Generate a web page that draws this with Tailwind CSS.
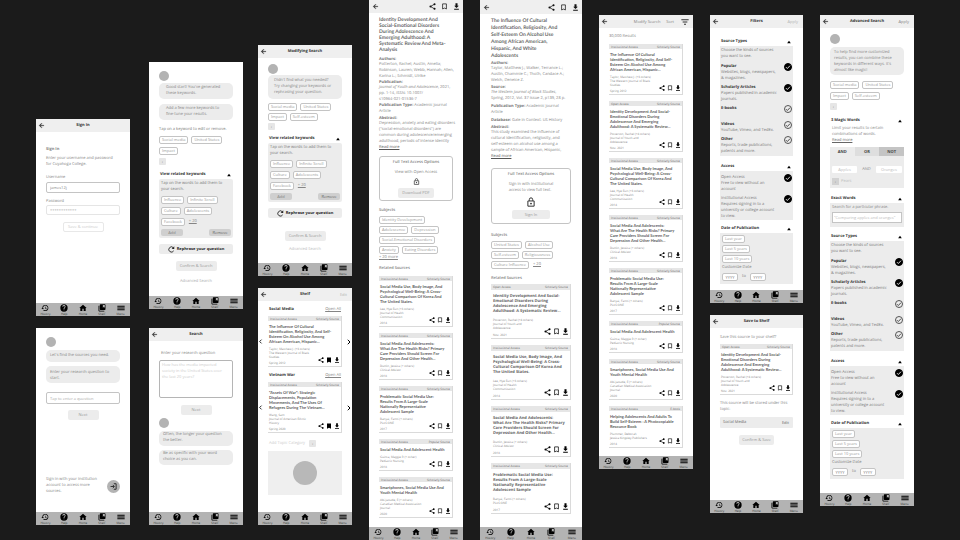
<!DOCTYPE html>
<html lang="en">
<head>
<meta charset="utf-8">
<title>Research app wireframes</title>
<script src="https://cdn.jsdelivr.net/npm/@tailwindcss/browser@4"></script>
</head>
<body class="bg-[#1b1b1b]">
<svg class="hidden" aria-hidden="true">
  <symbol id="back" viewBox="0 0 24 24"><path d="M20 11H7.8l5.6-5.6L12 4l-8 8 8 8 1.4-1.4L7.8 13H20z" stroke="currentColor"/></symbol>
  <symbol id="history" viewBox="0 0 24 24"><path d="M13 3a9 9 0 0 0-9 9H1l3.900 3.900.1.1L9 12H6a7 7 0 1 1 2.100 4.900l-1.500 1.500A9 9 0 1 0 13 3zm-1 5v5l4.300 2.500.7-1.200-3.500-2.100V8z"/></symbol>
  <symbol id="help" viewBox="0 0 24 24"><path d="M12 1a11 11 0 1 0 0 22 11 11 0 0 0 0-22zm1.200 18h-2.400v-2.400h2.400zm2.300-8.200-1 1c-.8.800-1.300 1.500-1.300 3.200h-2.400v-.6c0-1.300.5-2.400 1.300-3.200l1.400-1.400A2.200 2.200 0 1 0 9.700 8.200H7.300a4.700 4.700 0 1 1 8.200 2.600z"/></symbol>
  <symbol id="home" viewBox="0 0 24 24"><path d="M10 21v-7h4v7h6v-9h3L12 2 1 12h3v9z"/></symbol>
  <symbol id="shelf" viewBox="0 0 24 24"><path d="M4 5H1.500v15c0 1.400 1.100 2.500 2.500 2.500h15V20H4zM20.500 1h-13A2 2 0 0 0 5.500 3v13a2 2 0 0 0 2 2h13a2 2 0 0 0 2-2V3a2 2 0 0 0-2-2zm0 10-3-2-3 2V3h6z"/></symbol>
  <symbol id="menu" viewBox="0 0 24 24"><path d="M1 18.500h22V16H1zm0-5.300h22v-2.400H1zM1 5.500V8h22V5.500z"/></symbol>
  <symbol id="share" viewBox="0 0 24 24"><path d="M19 4 5 12l14 8" fill="none" stroke="currentColor" stroke-width="2.500"/><circle cx="19" cy="4.500" r="3.500"/><circle cx="5" cy="12" r="3.500"/><circle cx="19" cy="19.500" r="3.500"/></symbol>
  <symbol id="mark" viewBox="0 0 24 24"><path d="M5.500 3h13v17.500L12 17.500l-6.500 3z" fill="none" stroke="currentColor" stroke-width="2.500"/></symbol>
  <symbol id="marked" viewBox="0 0 24 24"><path d="M4 2h16v20.500l-8-3.500-8 3.500z"/></symbol>
  <symbol id="down" viewBox="0 0 24 24"><path d="M20 9.500h-4.500V1h-7v8.500H4l8 8zM4 20v3h16v-3z"/></symbol>
  <symbol id="caret" viewBox="0 0 24 24"><path d="M1 19 12 5l11 14z"/></symbol>
  <symbol id="left" viewBox="0 0 24 24"><path d="M17 3 8 12l9 9" fill="none" stroke="currentColor" stroke-width="4"/></symbol>
  <symbol id="right" viewBox="0 0 24 24"><path d="m7 3 9 9-9 9" fill="none" stroke="currentColor" stroke-width="4"/></symbol>
  <symbol id="lock" viewBox="0 0 24 24"><path d="M4.500 9.500h15V22h-15zM8 9V6a4 4 0 0 1 8 0v3" fill="none" stroke="currentColor" stroke-width="2.400"/><circle cx="12" cy="15.700" r="2.200"/></symbol>
  <symbol id="login" viewBox="0 0 24 24"><path d="M2 12h12M9.500 6.500 15 12l-5.500 5.500M13 2.500h8v19h-8" fill="none" stroke="currentColor" stroke-width="3"/></symbol>
  <symbol id="redo" viewBox="0 0 24 24"><path d="M19.500 16.500A9 9 0 1 1 18 5.500" fill="none" stroke="currentColor" stroke-width="3"/><path d="M21.500 1v9h-9z"/></symbol>
  <symbol id="filter" viewBox="0 0 24 24"><path d="M9 20h6v-3H9zM1 4v3h22V4zm4 9.500h14v-3H5z"/></symbol>
  <symbol id="tick" viewBox="0 0 24 24"><path d="m6 12.500 4 4 8-8.500" fill="none" stroke="currentColor" stroke-width="2.600"/></symbol>
</svg>
<main id="canvas" class="relative min-h-screen overflow-hidden text-[4px] leading-[6px] text-[#858585] whitespace-nowrap font-['Open_Sans','Noto_Sans',sans-serif] [text-rendering:geometricPrecision]"></main>

<script>
const icon = (id, size = 'size-[7px]') => `<svg class="${size} shrink-0 fill-current" aria-hidden="true"><use href="#${id}"/></svg>`;

const header = (title, right = '') => `
  <header class="grid h-[13px] shrink-0 grid-cols-[1fr_auto_1fr] items-center bg-[#efefef] px-[2px]">
    <button aria-label="Back" class="justify-self-start text-[#222]">${icon('back')}</button>
    <h1 class="font-bold text-[#333]">${title}</h1>
    <div class="justify-self-end pr-[3px] text-[#b5b5b5]">${right}</div>
  </header>`;
const action = (t, c = '') => `<button class="block ${c}">${t}</button>`;

const tools = gap => `
  <div class="flex items-center text-[#111] ${gap}">
    <button aria-label="Share">${icon('share')}</button>
    <button aria-label="Bookmark">${icon('mark')}</button>
    <button aria-label="Download">${icon('down')}</button>
  </div>`;
const docHeader = h => `
  <header class="flex ${h} shrink-0 items-center justify-between bg-[#efefef] px-[3px]">
    <button aria-label="Back" class="text-[#222]">${icon('back')}</button>${tools('gap-[5px]')}
  </header>`;

const nav = () => `
  <nav class="mt-auto grid h-[13px] shrink-0 grid-cols-5 bg-[#b3b3b3] pt-px text-[3px] leading-[4px] text-[#333]">
    ${[['history','History'],['help','Help'],['home','Home'],['shelf','Shelf'],['menu','Menu']].map(([i, t]) =>
      `<a href="#" class="flex flex-col items-center"><span class="text-black">${icon(i, 'size-[8px]')}</span>${t}</a>`).join('')}
  </nav>`;

const avatar = `<div class="size-[10px] shrink-0 rounded-full bg-[#b3b3b3]"></div>`;
const bubble = (t, c) => `<p class="rounded-[5px] bg-[#ececec] ${c}">${t}</p>`;
const chip = t => `<button class="h-[8px] rounded-[2px] border border-[#c4c4c4] bg-white px-[2px] leading-[6px] text-[#999]">${t}</button>`;
const chips = (list, gap = 'gap-[3px]') => `<div class="flex ${gap}">${list.map(chip).join('')}</div>`;
const plus = `<button aria-label="Add keyword" class="flex size-[7px] items-center justify-center rounded-[1px] bg-[#e6e6e6] text-[#888]">+</button>`;
const soft = (t, c) => `<button class="block rounded-[2px] bg-[#ececec] text-center text-[#999] ${c}">${t}</button>`;
const section = (t, c) => `<div class="flex items-center justify-between pr-[2px] pl-px text-[#333] ${c}"><h2 class="font-bold">${t}</h2><button aria-label="Collapse ${t}" class="text-black">${icon('caret', 'size-[4px]')}</button></div>`;

const related = mt => `
  ${section('View related keywords', mt)}
  <div class="mt-px rounded-[2px] bg-[#ececec] px-[2px] pt-[2px] pb-[2px]">
    <p class="text-[#777]">Tap on the words to add them to<br>your search.</p>
    <div class="mt-[3px] flex flex-col gap-[3px]">
      ${chips(['Influence', 'Infinite Scroll'])}
      ${chips(['Culture', 'Adolescents'])}
      <div class="flex items-center gap-[4px]">${chip('Facebook')}<a href="#" class="underline">+ 20</a></div>
    </div>
    <div class="mt-[3px] flex justify-between">
      <button class="h-[7px] w-[22px] rounded-[2px] bg-[#cfcfcf] leading-[6px]">Add</button>
      <button class="h-[7px] w-[22px] rounded-[2px] bg-[#cfcfcf] leading-[6px] text-[#666]">Remove</button>
    </div>
  </div>
  <button class="mt-[6px] flex h-[10px] w-full items-center justify-center gap-[2px] rounded-[2px] bg-[#ececec] font-bold text-[#222]">${icon('redo')}Rephrase your question</button>`;

const papers = {
  alcohol: ['Institutional Access', 'Scholarly Source', 'The Influence Of Cultural<br>Identification, Religiosity, And Self-<br>Esteem On Alcohol Use Among<br>African American, Hispanic...', 'Taylor, Matthew J. (+3 others)<br>The Western Journal of Black<br>Studies', 'Spring 2012'],
  war: ['Institutional Access', 'Scholarly Source', '"Assets Of War": Strategic<br>Displacements, Population<br>Movements, And The Uses Of<br>Refugees During The Vietnam...', 'Wang, Sam<br>Journal of American Ethnic<br>History', 'Spring 2020'],
  identity: ['Open Access', 'Scholarly Source', 'Identity Development And Social-<br>Emotional Disorders During<br>Adolescence And Emerging<br>Adulthood: A Systematic Review...', 'Potterton, Rachel (+4 others)<br>Journal of Youth and<br>Adolescence', 'Nov. 2021'],
  body: ['Institutional Access', 'Scholarly Source', 'Social Media Use, Body Image, And<br>Psychological Well-Being: A Cross-<br>Cultural Comparison Of Korea And<br>The United States.', 'Lee, Hye Eun (+3 others)<br>Journal of Health<br>Communication', '2014'],
  risks: ['Institutional Access', 'Scholarly Source', 'Social Media And Adolescents:<br>What Are The Health Risks? Primary<br>Care Providers Should Screen For<br>Depression And Other Health...', 'Dunlin, Jessica (+ others)<br>Clinical Advisor', '2018'],
  problematic: ['Institutional Access', 'Scholarly Source', 'Problematic Social Media Use:<br>Results From A Large-Scale<br>Nationally Representative<br>Adolescent Sample', 'Banyai, Fanni (+ others)<br>PLoS ONE', '2017'],
  health: ['Institutional Access', 'Popular Source', 'Social Media And Adolescent Health', 'Guinta, Maggie R (+ other)<br>Pediatric Nursing', '2018'],
  phones: ['Institutional Access', 'Scholarly Source', 'Smartphones, Social Media Use And<br>Youth Mental Health', 'Abi-Jaoude, E (+ others)<br>Canadian Medical Association<br>Journal', '2020'],
  helping: ['Institutional Access', 'E-book', 'Helping Adolescents And Adults To<br>Build Self-Esteem : A Photocopiable<br>Resource Book', 'Plummer, Deborah<br>Jessica Kingsley Publishers', '2014']
};
const card = (key, saved = false) => {
  const [access, kind, title, meta, date] = papers[key];
  return `
  <article class="border-r border-b border-[#dadada] pb-px text-[3px] leading-[4px]">
    <div class="flex h-[5px] items-center justify-between bg-[#e6e6e6] px-[2px] text-[#666]"><span>${access}</span><span>${kind}</span></div>
    <h3 class="mt-[3px] pl-px font-['Lato',sans-serif] text-[4px] leading-[5px] font-bold text-[#5c5c5c]">${title}</h3>
    <div class="mt-[3px] flex items-end justify-between pr-px pl-px">
      <div><p>${meta}</p><p class="mt-[2px]">${date}</p></div>
      <div class="mb-[2px] flex gap-[2px] text-black">
        <button aria-label="Share">${icon('share', 'size-[6px]')}</button>
        <button aria-label="Bookmark">${icon(saved ? 'marked' : 'mark', 'size-[6px]')}</button>
        <button aria-label="Download">${icon('down', 'size-[6px]')}</button>
      </div>
    </div>
  </article>`;
};
const wideCard = key => {
  const [access, kind, title, meta, date] = papers[key];
  return `
  <article class="border-r border-b border-[#dadada] pb-px text-[3px] leading-[4px]">
    <div class="flex h-[6px] items-center justify-between bg-[#e6e6e6] px-[2px] text-[#666]"><span>${access}</span><span>${kind}</span></div>
    <h3 class="mt-[4px] pl-[2px] text-[4px] leading-[5px] font-bold text-[#666]">${title}</h3>
    <div class="mt-[4px] flex items-end justify-between pr-px pl-[2px]">
      <div><p>${meta}</p><p class="mt-[3px]">${date}</p></div>
      <div class="mb-[2px] flex gap-[2px] text-black">
        <button aria-label="Share">${icon('share')}</button>
        <button aria-label="Bookmark">${icon('mark')}</button>
        <button aria-label="Download">${icon('down')}</button>
      </div>
    </div>
  </article>`;
};

const option = (name, text, on, mt, weight = 'font-bold text-[#333]') => `
  <label class="flex items-start justify-between ${mt}">
    <span><b class="${weight}">${name}</b>${text ? '<br>' + text : ''}</span>
    <span class="-mt-px grid size-[8px]">
      <input type="checkbox" ${on ? 'checked' : ''} class="peer col-start-1 row-start-1 size-[8px] appearance-none rounded-full border border-[#555] checked:border-black checked:bg-black">
      <span class="pointer-events-none col-start-1 row-start-1 text-[#333] peer-checked:text-white">${icon('tick', 'size-[8px]')}</span>
    </span>
  </label>`;
const filters = mt => `
  ${section('Source Types', mt)}
  <div class="mt-px bg-[#ececec] px-px pt-[2px] pb-px text-[#777]">
    <p>Choose the kinds of sources<br>you want to see.</p>
    ${option('Popular', 'Websites, blogs, newspapers,<br>&amp; magazines.', true, 'mt-[4px]')}
    ${option('Scholarly Articles', 'Papers published in academic<br>journals.', true, 'mt-[3px]')}
    ${option('E-books', '', false, 'mt-[3px]')}
    ${option('Videos', 'YouTube, Vimeo, and TedEx.', false, 'mt-[9px]')}
    ${option('Other', 'Reports, trade publications,<br>patents and more.', false, 'mt-[3px]')}
  </div>
  ${section('Access', 'mt-[8px]')}
  <div class="mt-px bg-[#ececec] px-px pt-[4px] text-[#777]">
    ${option('Open Access', 'Free to view without an<br>account', true, '', 'font-normal')}
    ${option('Institutional Access', 'Requires signing in to a<br>university or college account<br>to view.', true, 'mt-[3px]', 'font-normal')}
  </div>
  ${section('Date of Publication', 'mt-[6px]')}
  <div class="mt-px flex flex-col items-start gap-[2px] bg-[#ececec] px-[2px] pt-[2px] pb-[3px] text-[#777]">
    ${chip('Last year')}${chip('Last 5 years')}${chip('Last 10 years')}
    <p>Customize Date</p>
    <div class="flex items-center gap-[4px]">
      <input aria-label="From year" placeholder="YYYY" class="h-[8px] w-[16px] rounded-[2px] border border-[#c4c4c4] bg-white text-center placeholder:text-[#888]">
      to
      <input aria-label="To year" placeholder="YYYY" class="h-[8px] w-[16px] rounded-[2px] border border-[#c4c4c4] bg-white text-center placeholder:text-[#888]">
    </div>
  </div>`;

const bold = t => `<b class="block leading-[5px] text-[#777]">${t}</b>`;
const field = 'block w-full rounded-[2px] border border-[#c4c4c4] bg-white px-[3px] placeholder:text-[#aaa]';

const screens = [
['left-[36px] top-[119px] w-[94px] min-h-[197px]', `${header('Sign In')}
  <form class="px-[10px] pt-[15px]">
    <h2 class="font-bold">Sign In</h2>
    <p class="mt-[3px]">Enter your username and password<br>for Cuyahoga College.</p>
    <label class="mt-[7px] block">Username<input value="james12j" class="${field} mt-px h-[11px]"></label>
    <label class="mt-[6px] block">Password<input type="password" placeholder="************" class="${field} h-[10px] border-[#e5e5e5]"></label>
    <button type="button" class="mx-auto mt-[7px] block h-[10px] w-[41px] rounded-[2px] border border-[#e8e8e8] text-[#ccc]">Save &amp; continue</button>
  </form>`],
['left-[149px] top-[62px] w-[94px] min-h-[247px]', `
  <div class="px-[10px] pt-[9px]">
    ${avatar}
    ${bubble('Good start! You\'ve generated<br>these keywords.', 'mt-[2px] py-[2px] pl-[7px]')}
    ${bubble('Add a few more keywords to<br>fine-tune your results.', 'mt-[5px] py-[2px] pl-[7px]')}
    <p class="mt-[7px] text-[#777]">Tap on a keyword to edit or remove.</p>
    <div class="mt-[3px] flex flex-col gap-[3px]">${chips(['Social media', 'United States'])}${chips(['Impact'])}${plus}</div>
    ${related('mt-[7px]')}
    ${soft('Confirm &amp; Search', 'mx-auto mt-[7px] h-[10px] w-[41px]')}
    <a href="#" class="mt-[8px] block text-center text-[#aaa]">Advanced Search</a>
  </div>`],
['left-[258px] top-[45px] w-[94px] min-h-[231px]', `${header('Modifying Search')}
  <div class="px-[10px] pt-[6px]">
    ${avatar}
    ${bubble('Didn\'t find what you needed?<br>Try changing your keywords or<br>rephrasing your question.', 'mt-px py-[3px] pl-[6px]')}
    <div class="mt-[4px] flex flex-col gap-[2px]">${chips(['Social media', 'United States'])}${chips(['Impact', 'Self-esteem'])}${plus}</div>
    ${related('mt-[6px]')}
    ${soft('Confirm &amp; Search', 'mx-auto mt-[13px] h-[10px] w-[41px]')}
    <a href="#" class="mt-[6px] block text-center text-[#bbb]">Advanced Search</a>
  </div>`],
['left-[258px] top-[288px] w-[94px] min-h-[237px]', `${header('Shelf', action('Edit'))}
  <div class="pt-[6px]">
    ${[['Social Media', 'alcohol', 'pt-0'], ['Vietnam War', 'war', 'pt-[6px]']].map(([t, k, pt]) => `
    <section class="${pt}">
      <div class="flex justify-between px-[11px]"><h2 class="font-bold text-[#333]">${t}</h2><a href="#" class="underline">Open All</a></div>
      <div class="mt-[3px] grid grid-cols-[10px_1fr_10px] items-center text-black">
        <button aria-label="Previous in ${t}">${icon('left', 'size-[5px]')}</button>
        <div class="text-[#858585]">${card(k, true)}</div>
        <button aria-label="Next in ${t}" class="justify-self-end">${icon('right', 'size-[6px]')}</button>
      </div>
    </section>`).join('')}
    <div class="mt-[7px] flex items-center gap-[4px] pl-[11px] text-[#ccc]">Add Topic Category ${plus}</div>
    <div class="mx-[10px] mt-[4px] flex h-[44px] items-center justify-center bg-[#efefef]"><div class="size-[24px] rounded-full bg-[#b8b8b8]"></div></div>
  </div>`],
['left-[36px] top-[328px] w-[94px] min-h-[197px]', `
  <div class="px-[10px] pt-[9px]">
    ${avatar}
    ${bubble('Let\'s find the sources you need.', 'mt-[3px] py-[3px] pl-[4px]')}
    ${bubble('Enter your research question to<br>start.', 'mt-[4px] pt-[4px] pb-px pl-[4px]')}
    <input aria-label="Question" placeholder="Tap to enter a question" class="${field} mt-[9px] h-[12px]">
    ${soft('Next', 'mx-auto mt-[6px] h-[10px] w-[31px]')}
    <div class="mt-[57px] flex items-center justify-between">
      <p>Sign in with your institution<br>account to access more<br>sources.</p>
      <button aria-label="Sign in" class="flex size-[13px] items-center justify-center rounded-full bg-[#b3b3b3] text-[#222]">${icon('login')}</button>
    </div>
  </div>`],
['left-[149px] top-[328px] w-[94px] min-h-[197px]', `${header('Search')}
  <div class="px-[10px] pt-[10px]">
    <label class="block"><span class="block pl-[2px]">Enter your research question</span>
      <textarea placeholder="How has the media impacted
society in the United States over
the last 20 years?" class="mt-[3px] block h-[38px] w-full resize-none rounded-[2px] border border-[#b5b5b5] px-[2px] pt-px placeholder:text-[#ccc]"></textarea></label>
    ${soft('Next', 'mx-auto mt-[7px] h-[10px] w-[31px]')}
    <div class="mt-[3px]">${avatar}</div>
    ${bubble('Often, the longer your question<br>the better.', 'mt-[3px] pt-px pb-[2px] pl-[4px]')}
    ${bubble('Be as specific with your word<br>choice as you can.', 'mt-[4px] pt-px pb-[2px] pl-[4px]')}
  </div>`],
['left-[369px] top-0 w-[94px] min-h-screen', `${docHeader('h-[13px]')}
  <div class="px-[10px] pt-[4px] pb-[4px]">
    <h1 class="font-['Lato',sans-serif] text-[5px] font-bold text-[#666]">Identity Development And<br>Social-Emotional Disorders<br>During Adolescence And<br>Emerging Adulthood: A<br>Systematic Review And Meta-<br>Analysis</h1>
    <div class="mt-[4px]">${bold('Authors:')}Potterton, Rachel; Austin, Amelia;<br>Robinson, Lauren; Webb, Hannah; Allen,<br>Karina L.; Schmidt, Ulrike</div>
    <div>${bold('Publication:')}<i>Journal of Youth and Adolescence</i>, 2021,<br>pp. 1-14, ISSN: 10.1007/<br>s10964-021-01536-7</div>
    <p><b class="text-[#777]">Publication Type:</b> Academic Journal<br>Article</p>
    <div class="mt-px">${bold('Abstract:')}Depression, anxiety and eating disorders<br>("social-emotional disorders") are<br>common during adolescence/emerging<br>adulthood, periods of intense identity</div>
    <a href="#" class="block text-[#555] underline">Read more</a>
    <section class="mt-[5px] flex flex-col items-center rounded-[3px] border border-[#c4c4c4] pt-[3px] pb-[2px]">
      <h2 class="font-semibold">Full Text Access Options</h2>
      <p class="mt-[4px]">View with Open Access</p>
      <span class="mt-[2px] text-[#333]">${icon('lock')}</span>
      ${soft('Download PDF', 'mt-[3px] h-[10px] w-[36px]')}
    </section>
    <h2 class="mt-[7px] font-semibold">Subjects</h2>
    <div class="mt-[2px] flex flex-col items-start gap-[2px]">${chip('Identity Development')}${chips(['Adolescence', 'Depression'])}${chip('Social-Emotional Disorders')}${chips(['Anxiety', 'Eating Disorders'])}</div>
    <a href="#" class="mt-px block underline">+ 20 more</a>
    <h2 class="mt-[5px] font-semibold">Related Sources</h2>
    <div class="mt-[4px] flex flex-col gap-[6px]">${['body', 'risks', 'problematic', 'health', 'phones'].map(k => card(k)).join('')}</div>
  </div>`],
['left-[480px] top-0 w-[102px] min-h-screen', `${docHeader('h-[14px]')}
  <div class="px-[11px] pt-[4px] pb-[4px]">
    <h1 class="font-['Lato',sans-serif] text-[5px] leading-[7px] font-bold text-[#666]">The Influence Of Cultural<br>Identification, Religiosity, And<br>Self-Esteem On Alcohol Use<br>Among African American,<br>Hispanic, And White<br>Adolescents</h1>
    <div class="mt-px">${bold('Authors:')}Taylor, Matthew J.; Walker, Terrance L.;<br>Austin, Chammie C.; Thoth, Candace A.;<br>Welch, Deneice Z.</div>
    <div class="mt-px">${bold('Source:')}<i>The Western Journal of Black Studies</i>,<br>Spring, 2012, Vol. 37 Issue 2, p139, 28 p.</div>
    <p class="mt-[2px]"><b class="text-[#777]">Publication Type:</b> Academic Journal<br>Article</p>
    <p class="mt-[2px]"><b class="text-[#777]">Database:</b> Gale In Context: US History</p>
    <div class="mt-px">${bold('Abstract:')}This study examined the influence of<br>cultural identification, religiosity, and<br>self-esteem on alcohol use among a<br>sample of African American, Hispanic,</div>
    <a href="#" class="block text-[#555] underline">Read more</a>
    <section class="mt-[8px] flex flex-col items-center rounded-[3px] border border-[#c4c4c4] pt-[3px] pb-[4px]">
      <h2 class="font-semibold">Full Text Access Options</h2>
      <p class="mt-[4px]">Sign in with institutional<br>access to view full text.</p>
      <span class="mt-[3px] text-[#333]">${icon('lock', 'size-[10px]')}</span>
      ${soft('Sign In', 'mt-[3px] h-[9px] w-[38px]')}
    </section>
    <h2 class="mt-[9px] font-semibold">Subjects</h2>
    <div class="mt-[2px] flex flex-col items-start gap-[2px]">${chips(['United States', 'Alcohol Use'])}${chips(['Self-esteem', 'Religiousness'])}<div class="flex items-center gap-[4px]">${chip('Culture Influence')}<a href="#" class="underline">+ 20</a></div></div>
    <h2 class="mt-[7px] font-semibold">Related Sources</h2>
    <div class="mt-[2px] flex flex-col gap-[6px]">${['identity', 'body', 'risks', 'problematic'].map(wideCard).join('')}</div>
  </div>`],
['left-[599px] top-[15px] w-[94px] min-h-[454px]', `
  <header class="flex h-[13px] shrink-0 items-center bg-[#efefef] pr-[4px] pl-[2px]">
    <button aria-label="Back" class="mr-auto text-[#222]">${icon('back')}</button>
    <button>Modify Search</button><button class="mr-[7px] ml-[6px]">Sort</button>
    <button aria-label="Filter" class="text-[#333]">${icon('filter', 'size-[8px]')}</button>
  </header>
  <div class="px-[10px] pt-[6px] pb-[4px]">
    <h1>30,000 Results</h1>
    <div class="mt-[4px] flex flex-col gap-[6px]">${['alcohol', 'identity', 'body', 'risks', 'problematic', 'health', 'phones', 'helping'].map(k => card(k)).join('')}</div>
  </div>`],
['left-[710px] top-[15px] w-[93px] min-h-[288px]', `${header('Filters', action('Apply'))}
  <div class="px-[10px] pt-[11px]">${filters('')}</div>`],
['left-[710px] top-[315px] w-[93px] min-h-[198px]', `${header('Save to Shelf')}
  <div class="px-[10px] pt-[7px]">
    <p class="mb-[3px]">Save this source to your shelf?</p>
    ${card('identity')}
    <p class="mt-[6px]">This source will be stored under this<br>topic:</p>
    <div class="mt-[4px] flex h-[11px] items-center justify-between rounded-[1px] bg-[#ececec] pr-[4px] pl-[3px] text-[#666]"><span>Social Media</span><button>Edit</button></div>
    ${soft('Confirm &amp; Save', 'mx-auto mt-[7px] h-[10px] w-[35px]')}
  </div>`],
['left-[820px] top-[15px] w-[94px] min-h-[491px]', `${header('Advanced Search', action('Apply', 'text-[#858585]'))}
  <div class="px-[10px] pt-[6px]">
    ${avatar}
    ${bubble('To help find more customized<br>results, you can combine these<br>keywords in different ways. It\'s<br>almost like magic!', 'mt-[3px] pt-[3px] pb-px pl-[4px]')}
    <div class="mt-[6px] flex flex-col gap-[3px]">${chips(['Social media', 'United States'])}${chips(['Impact', 'Self-esteem'])}${plus}</div>
    ${section('3 Magic Words', 'mt-[8px]')}
    <p class="mt-[2px] pl-[2px]">Limit your results to certain<br>combinations of words.</p>
    <a href="#" class="block pl-[2px] text-[#666] underline">Read more</a>
    <div class="mt-[3px] bg-[#ececec] pb-[3px]">
      <div class="grid grid-cols-3 text-[#444]">
        <button class="h-[9px] font-bold">AND</button><button class="bg-[#dedede] font-bold">OR</button><button class="bg-[#c4c4c4] font-bold">NOT</button>
      </div>
      <div class="mt-[10px] flex items-center justify-between px-[2px]">
        <input aria-label="First word" placeholder="Apples" class="h-[7px] w-[25px] rounded-[1px] bg-white text-center placeholder:text-[#bbb]">AND
        <input aria-label="Second word" placeholder="Oranges" class="h-[7px] w-[26px] rounded-[1px] bg-white text-center placeholder:text-[#bbb]">
      </div>
      <div class="mt-[5px] flex items-center gap-[2px] pl-[2px] text-[#bbb]"><button aria-label="Add word" class="flex size-[7px] items-center justify-center bg-[#d2d2d2] text-[#888]">+</button>Pears</div>
    </div>
    ${section('Exact Words', 'mt-[8px]')}
    <label class="mt-px block bg-[#ececec] px-[2px] pt-[2px] pb-[4px]">Search for a particular phrase.
      <input placeholder="&quot;Comparing apples and oranges&quot;" class="mt-px block h-[11px] w-full border border-[#c4c4c4] bg-white px-px placeholder:text-[#bbb]"></label>
    ${filters('mt-[7px]')}
  </div>`]
];

document.getElementById('canvas').innerHTML = screens.map(([place, body]) =>
  `<section class="absolute flex flex-col bg-white ${place}">${body}${nav()}</section>`).join('');
</script>
</body>
</html>
